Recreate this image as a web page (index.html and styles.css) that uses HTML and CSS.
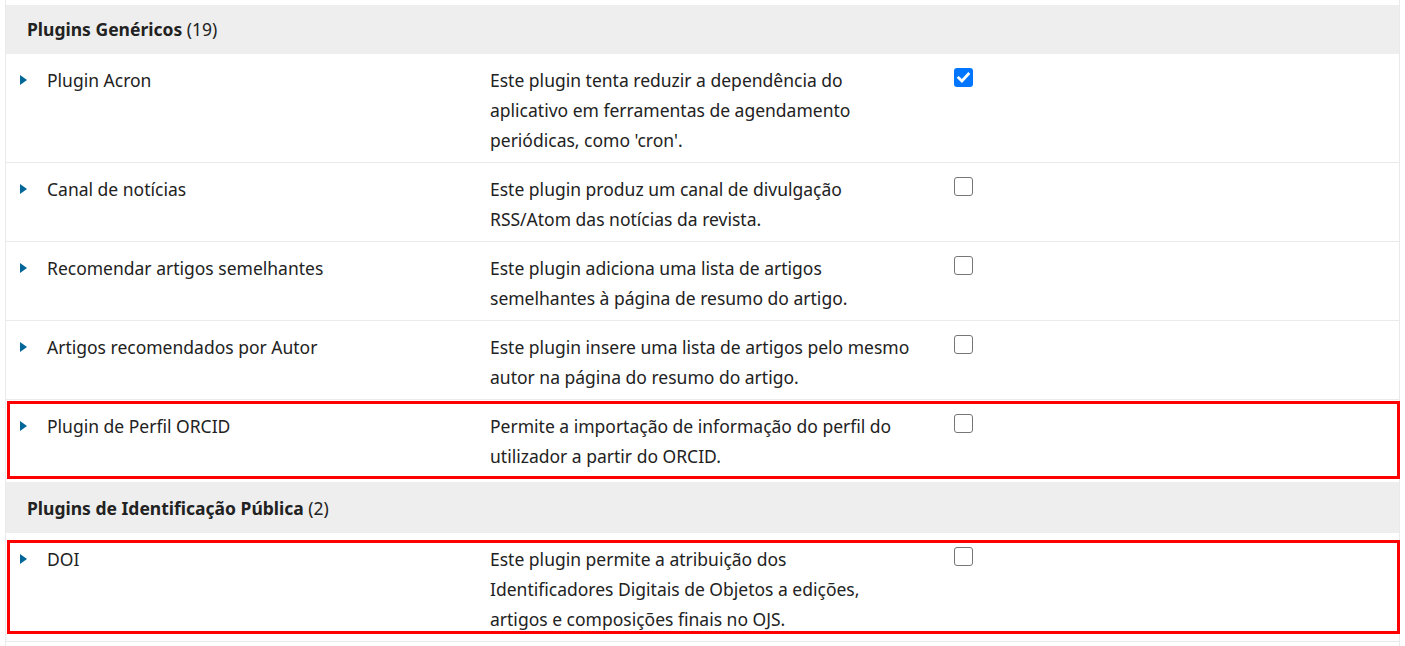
FILE: index.html
```html
<!DOCTYPE html>
<html lang="pt">
<head>
<meta charset="utf-8">
<link rel="stylesheet" href="styles.css">
</head>
<body>
<div class="wrap">
  <div class="group-head"><strong>Plugins Genéricos</strong> (19)</div>
  <div class="row">
    <span class="arrow"></span>
    <div class="name">Plugin Acron</div>
    <div class="desc">Este plugin tenta reduzir a dependência do aplicativo em ferramentas de agendamento periódicas, como 'cron'.</div>
    <span class="cb checked"><svg viewBox="0 0 19 19" width="19" height="19"><path d="M4.6 9.8 L7.9 13 L14.4 6" fill="none" stroke="#fff" stroke-width="2.7" stroke-linecap="square"/></svg></span>
  </div>
  <div class="row">
    <span class="arrow"></span>
    <div class="name">Canal de notícias</div>
    <div class="desc">Este plugin produz um canal de divulgação RSS/Atom das notícias da revista.</div>
    <span class="cb"></span>
  </div>
  <div class="row">
    <span class="arrow"></span>
    <div class="name">Recomendar artigos semelhantes</div>
    <div class="desc">Este plugin adiciona uma lista de artigos semelhantes à página de resumo do artigo.</div>
    <span class="cb"></span>
  </div>
  <div class="row">
    <span class="arrow"></span>
    <div class="name">Artigos recomendados por Autor</div>
    <div class="desc">Este plugin insere uma lista de artigos pelo mesmo autor na página do resumo do artigo.</div>
    <span class="cb"></span>
  </div>
  <div class="row mark1">
    <span class="arrow"></span>
    <div class="name">Plugin de Perfil ORCID</div>
    <div class="desc">Permite a importação de informação do perfil do utilizador a partir do ORCID.</div>
    <span class="cb"></span>
  </div>
  <div class="group-head second"><strong>Plugins de Identificação Pública</strong> (2)</div>
  <div class="row mark2">
    <span class="arrow"></span>
    <div class="name">DOI</div>
    <div class="desc">Este plugin permite a atribuição dos Identificadores Digitais de Objetos a edições, artigos e composições finais no OJS.</div>
    <span class="cb"></span>
  </div>
</div>
</body>
</html>
```
FILE: styles.css
```css
html, body {
  margin: 0;
  padding: 0;
  background: #fff;
}
body {
  font-family: "Noto Sans", "Open Sans", sans-serif;
  font-size: 17.5px;
  color: #222;
}
.wrap {
  margin-left: 5px;
  width: 1393px;
  border-left: 1px solid #eaeaea;
  border-right: 1px solid #eaeaea;
  padding-top: 5px;
  height: 641px;
}
.group-head {
  background: #eee;
  height: 49px;
  line-height: 49px;
  padding-left: 21px;
  box-sizing: border-box;
}
.group-head.second {
  height: 51px;
  line-height: 51px;
  padding-top: 1px;
  margin-top: 3px;
}
.group-head strong {
  font-weight: 700;
}
.row {
  position: relative;
  display: flex;
  align-items: flex-start;
  padding: 11px 0 7px 14px;
  line-height: 30px;
  border-bottom: 1px solid #eaeaea;
}
.arrow {
  flex: none;
  width: 0;
  height: 0;
  margin-top: 10px;
  margin-right: 20px;
  border-top: 5px solid transparent;
  border-bottom: 5px solid transparent;
  border-left: 7px solid #006798;
}
.name {
  flex: none;
  width: 443px;
}
.desc {
  flex: none;
  width: 422px;
}
.cb {
  flex: none;
  box-sizing: border-box;
  width: 19px;
  height: 19px;
  margin-left: 42px;
  margin-top: 3px;
  border: 1px solid #767676;
  border-radius: 3px;
  background: #fff;
}
.cb.checked {
  border: none;
  background: #0075ff;
}
.cb svg {
  display: block;
}
.mark1::after,
.mark2::after {
  content: "";
  position: absolute;
  left: 1px;
  right: -1px;
  border: 3px solid #f00;
  pointer-events: none;
}
.mark1::after {
  top: 1px;
  bottom: -1px;
}
.mark2::after {
  top: 7px;
  bottom: 7px;
}
```
